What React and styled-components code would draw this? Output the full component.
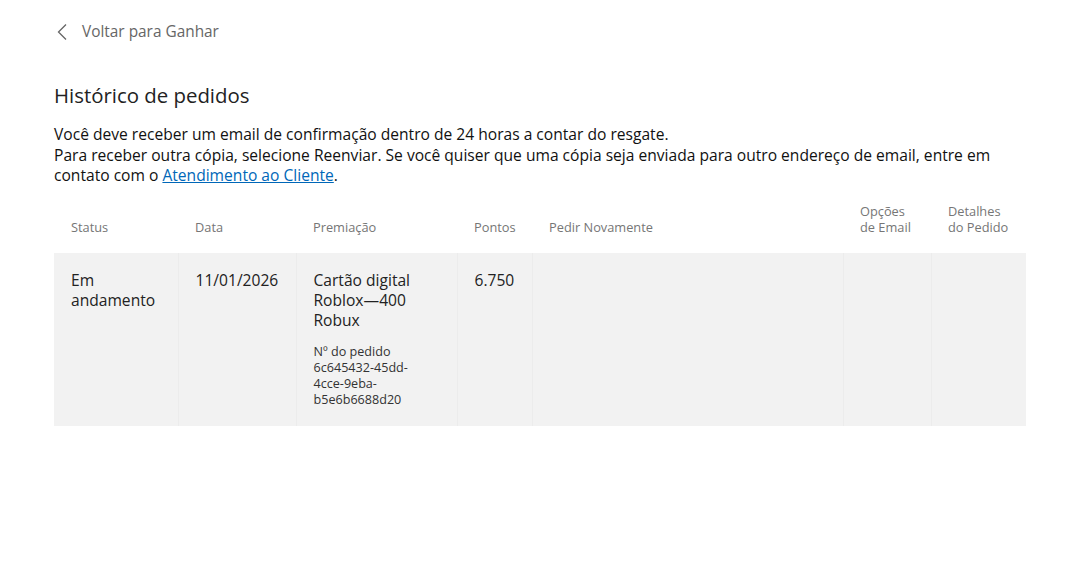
import React from 'react'
import styled, { createGlobalStyle } from 'styled-components'

const GlobalStyle = createGlobalStyle`
  body {
    margin: 0;
    background: #fff;
    font-family: "Open Sans", "Noto Sans", sans-serif;
    color: #222;
  }
`

const Page = styled.div`
  padding: 19px 54px 0 54px;
  width: 972px;
`

const BackLink = styled.a`
  display: flex;
  align-items: center;
  gap: 12px;
  color: #666;
  font-size: 15.4px;
  line-height: 26px;
  text-decoration: none;
  svg {
    margin-left: 2px;
  }
`

const Title = styled.h1`
  margin: 37px 0 0 0;
  font-size: 20.4px;
  font-weight: 400;
  line-height: 26px;
  color: #222;
`

const Intro = styled.p`
  margin: 16px 0 0 0;
  font-size: 15.6px;
  line-height: 20.5px;
  color: #111;
  a {
    color: #0067b8;
    text-decoration: underline;
  }
`

const Table = styled.table`
  margin-top: 17px;
  width: 972px;
  border-collapse: collapse;
  table-layout: fixed;
`

const HeadCell = styled.th`
  box-sizing: border-box;
  width: ${({ $w }) => $w}px;
  padding: 0 8px 18px 17px;
  text-align: left;
  vertical-align: bottom;
  font-size: 12.8px;
  font-weight: 400;
  line-height: 16px;
  color: #767676;
`

const Row = styled.tr`
  background: #f2f2f2;
`

const Cell = styled.td`
  box-sizing: border-box;
  padding: 17px 20px 17px 17px;
  vertical-align: top;
  font-size: 15.6px;
  line-height: 20px;
  color: #222;
  border-left: ${({ $first }) => ($first ? 'none' : '1px solid #ececec')};
`

const OrderNumber = styled.div`
  margin-top: 14px;
  font-size: 12.6px;
  line-height: 16.3px;
  color: #333;
`

const columns = [
  { label: ['Status'], w: 124 },
  { label: ['Data'], w: 118 },
  { label: ['Premiação'], w: 161 },
  { label: ['Pontos'], w: 75 },
  { label: ['Pedir Novamente'], w: 311 },
  { label: ['Opções', 'de Email'], w: 88 },
  { label: ['Detalhes', 'do Pedido'], w: 95 },
]

const Chevron = () => (
  <svg width="14" height="18" viewBox="0 0 14 18" fill="none">
    <path d="M10 1.5 L2.5 9 L10 16.5" stroke="#666" strokeWidth="1.3" />
  </svg>
)

export default function App() {
  return (
    <>
      <GlobalStyle />
      <Page>
        <BackLink href="#">
          <Chevron />
          Voltar para Ganhar
        </BackLink>
        <Title>Histórico de pedidos</Title>
        <Intro>
          Você deve receber um email de confirmação dentro de 24 horas a contar do resgate.
          <br />
          Para receber outra cópia, selecione Reenviar. Se você quiser que uma cópia seja enviada para
          outro endereço de email, entre em contato com o <a href="#">Atendimento ao Cliente</a>.
        </Intro>
        <Table>
          <thead>
            <tr>
              {columns.map((c) => (
                <HeadCell key={c.label.join(' ')} $w={c.w}>
                  {c.label.map((line, i) => (
                    <React.Fragment key={line}>
                      {i > 0 && <br />}
                      {line}
                    </React.Fragment>
                  ))}
                </HeadCell>
              ))}
            </tr>
          </thead>
          <tbody>
            <Row>
              <Cell $first>Em andamento</Cell>
              <Cell>11/01/2026</Cell>
              <Cell>
                Cartão digital Roblox{'\u2060—\u2060'}400 Robux
                <OrderNumber>
                  Nº do pedido
                  <br />
                  6c645432-45dd-
                  <br />
                  4cce-9eba-
                  <br />
                  b5e6b6688d20
                </OrderNumber>
              </Cell>
              <Cell>6.750</Cell>
              <Cell />
              <Cell />
              <Cell />
            </Row>
          </tbody>
        </Table>
      </Page>
    </>
  )
}
